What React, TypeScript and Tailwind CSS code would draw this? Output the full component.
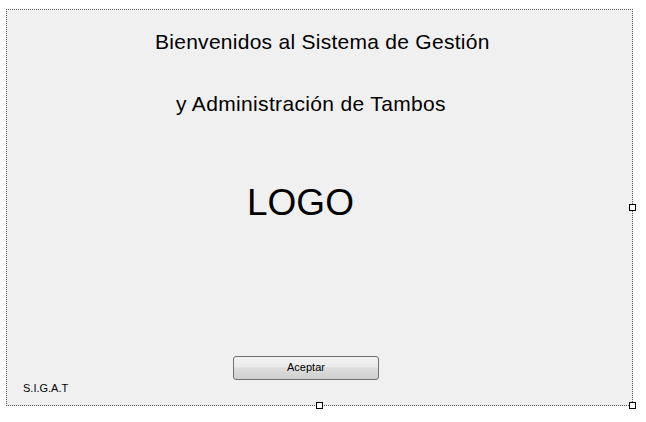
import React from "react";

const Handle = ({ className }: { className: string }) => (
  <div className={"absolute w-[7px] h-[7px] bg-white border border-black " + className} />
);

export default function App() {
  return (
    <div
      className="relative w-[646px] h-[422px] bg-white"
      style={{ fontFamily: '"Liberation Sans", Arial, sans-serif' }}
    >
      <div className="absolute left-0 top-0 pl-[6px] pt-[9px]">
        <div className="w-[627px] h-[397px] border border-dotted border-[#5a5a5a] bg-[#f0f0f0] flex flex-col text-black">
          <div className="mt-[20px] ml-[148px] text-[21px] leading-[24px] tracking-[0.27px] whitespace-nowrap">
            Bienvenidos al Sistema de Gestión
          </div>
          <div className="mt-[38px] ml-[169px] text-[21px] leading-[24px] tracking-[0.34px] whitespace-nowrap">
            y Administración de Tambos
          </div>
          <div className="mt-[66px] ml-[240px] text-[37px] leading-[42px] whitespace-nowrap">
            LOGO
          </div>
          <div className="mt-[130px] ml-[226px]">
            <button className="w-[146px] h-[24px] rounded-[3px] border border-[#707070] bg-[linear-gradient(to_bottom,#f2f2f2_0%,#ebebeb_45%,#dddddd_50%,#cfcfcf_100%)] text-[11px] leading-[13px] text-black">
              Aceptar
            </button>
          </div>
          <div className="mt-[2px] ml-[16px] text-[11px] leading-[13px] text-[#000]">S.I.G.A.T</div>
        </div>
      </div>
      <Handle className="left-[629px] top-[204px]" />
      <Handle className="left-[316px] top-[402px]" />
      <Handle className="left-[629px] top-[402px]" />
    </div>
  );
}
